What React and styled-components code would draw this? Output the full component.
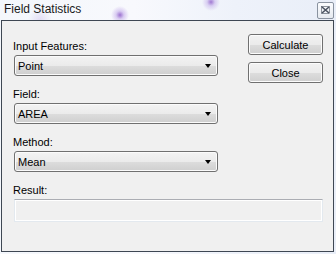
import styled, { createGlobalStyle } from "styled-components"

const Global = createGlobalStyle`
  html, body { margin: 0; padding: 0; }
  body { width: 336px; height: 254px; overflow: hidden; font-family: "Liberation Sans", Arial, sans-serif; }
`

const Window = styled.div`
  width: 336px;
  height: 254px;
  box-sizing: border-box;
  padding: 0 2px 2px 1px;
  display: flex;
  flex-direction: column;
  background:
    radial-gradient(circle at 120px 15px, rgba(140, 90, 200, 0.85) 0, rgba(160, 120, 220, 0.35) 4px, rgba(255,255,255,0) 9px),
    radial-gradient(circle at 211px 2px, rgba(140, 90, 200, 0.8) 0, rgba(160, 120, 220, 0.3) 4px, rgba(255,255,255,0) 9px),
    radial-gradient(circle at 40px 20px, rgba(170, 140, 220, 0.25) 0, rgba(255,255,255,0) 12px),
    linear-gradient(90deg, #f4f7fc 0%, #f8f9fd 40%, #eef2fa 70%, #e9eef8 100%);
`

const TitleBar = styled.div`
  height: 20px;
  display: flex;
  align-items: center;
  justify-content: space-between;
  padding-left: 3px;
`

const Title = styled.span`
  font-size: 12px;
  color: #1a1a1a;
  margin-top: -2px;
`

const CloseBox = styled.div`
  width: 15px;
  height: 15px;
  margin-top: 0px;
  border: 1px solid #8a93a0;
  border-radius: 2px;
  background: linear-gradient(#fbfcfe, #e6eaf0);
  display: flex;
  align-items: center;
  justify-content: center;
`

const Client = styled.div`
  flex: 1;
  border: 1px solid #3e4753;
  background: #f0f0f0;
  padding: 13px 10px 0 12px;
  display: flex;
  flex-direction: column;
  font-size: 11px;
  color: #000;
`

const TopRow = styled.div`
  display: flex;
  justify-content: space-between;
`

const Fields = styled.div`
  display: flex;
  flex-direction: column;
  gap: 12px;
  padding-top: 6px;
`

const Group = styled.div`
  display: flex;
  flex-direction: column;
  gap: 2px;
`

const Label = styled.label`
  line-height: 13px;
  padding-left: 0;
  margin-left: -1px;
`

const Combo = styled.div`
  width: 204px;
  height: 21px;
  box-sizing: border-box;
  border: 1px solid #707070;
  border-radius: 3px;
  box-shadow: inset 0 0 0 1px #fbfbfb;
  background: linear-gradient(#f3f3f3 0%, #ebebeb 50%, #dddddd 51%, #cfcfcf 100%);
  display: flex;
  align-items: center;
  justify-content: space-between;
  padding: 0 6px 0 3px;
`

const Arrow = styled.span`
  width: 0;
  height: 0;
  border-left: 3.5px solid transparent;
  border-right: 3.5px solid transparent;
  border-top: 4px solid #000;
`

const Buttons = styled.div`
  display: flex;
  flex-direction: column;
  gap: 7px;
`

const Button = styled.button`
  width: 75px;
  height: 21px;
  border: 1px solid #707070;
  border-radius: 3px;
  box-shadow: inset 0 0 0 1px #fcfcfc;
  background: linear-gradient(#f2f2f2 0%, #ebebeb 50%, #dddddd 51%, #cfcfcf 100%);
  font-family: inherit;
  font-size: 11px;
  color: #000;
  padding: 0;
`

const ResultGroup = styled(Group)`
  margin-top: 12px;
`

const ResultBox = styled.div`
  height: 23px;
  box-sizing: border-box;
  border: 1px solid #e3e9ef;
  border-top-color: #abadb3;
  border-bottom-color: #e3e9ef;
  box-shadow: inset 0 0 0 1px #ffffff;
  background: #f0f0f0;
`

const Combos = [
  { label: "Input Features:", value: "Point" },
  { label: "Field:", value: "AREA" },
  { label: "Method:", value: "Mean" },
]

export default function App() {
  return (
    <Window>
      <Global />
      <TitleBar>
        <Title>Field Statistics</Title>
        <CloseBox>
          <svg width="9" height="8" viewBox="0 0 9 8">
            <path d="M1 1 L8 7 M8 1 L1 7" stroke="#4a5260" strokeWidth="1.6" />
            <rect x="0.5" y="0.5" width="8" height="7" fill="none" stroke="#4a5260" strokeWidth="0.6" />
          </svg>
        </CloseBox>
      </TitleBar>
      <Client>
        <TopRow>
          <Fields>
            {Combos.map(c => (
              <Group key={c.label}>
                <Label>{c.label}</Label>
                <Combo>
                  <span>{c.value}</span>
                  <Arrow />
                </Combo>
              </Group>
            ))}
          </Fields>
          <Buttons>
            <Button>Calculate</Button>
            <Button>Close</Button>
          </Buttons>
        </TopRow>
        <ResultGroup>
          <Label>Result:</Label>
          <ResultBox />
        </ResultGroup>
      </Client>
    </Window>
  )
}
